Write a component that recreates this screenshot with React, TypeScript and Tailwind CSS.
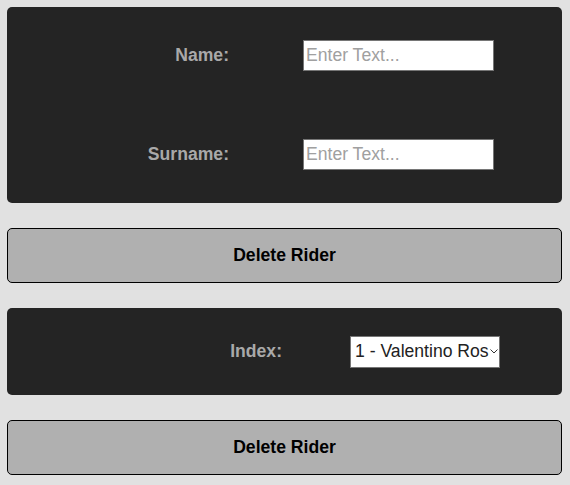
import React from "react";

const TextField = ({ label }: { label: string }) => (
  <div className="flex items-center">
    <label className="w-[222px] text-right font-bold text-[17.6px] text-[#a9a9a9]">{label}</label>
    <input
      type="text"
      placeholder="Enter Text..."
      className="ml-[74px] w-[191px] h-[31px] bg-white border border-[#767676] px-[2px] text-[17.6px] text-[#222] placeholder:text-[#a0a0a0] outline-none"
    />
  </div>
);

const DeleteButton = () => (
  <button className="w-full h-[55px] bg-[#b0b0b0] border border-black rounded-[5px] font-bold text-[17.6px] text-black">
    Delete Rider
  </button>
);

export default function App() {
  return (
    <div className="min-h-[485px] bg-[#e1e1e1] pl-[7px] pt-[7px] pr-[8px] flex flex-col gap-[25px] font-['Liberation_Sans',Arial,sans-serif]">
      <div className="bg-[#242424] rounded-[5px] pt-[33px] pb-[33px] flex flex-col gap-[68px]">
        <TextField label="Name:" />
        <TextField label="Surname:" />
      </div>
      <DeleteButton />
      <div className="bg-[#242424] rounded-[5px] h-[87px] flex items-center">
        <label className="w-[275px] text-right font-bold text-[17.6px] text-[#a9a9a9]">Index:</label>
        <div className="relative ml-[68px]">
          <select
            defaultValue="1"
            className="appearance-none w-[150px] h-[32px] bg-white border border-[#767676] pl-[4px] pr-[10px] text-[17.6px] text-[#222] outline-none"
          >
            <option value="1">1 - Valentino Rossi</option>
            <option value="2">2 - Marc Marquez</option>
          </select>
          <svg
            className="absolute right-[2px] top-[13px] pointer-events-none"
            width="8"
            height="5"
            viewBox="0 0 8 5"
            fill="none"
          >
            <path d="M0.5 0.5 L4 4 L7.5 0.5" stroke="#333" strokeWidth="1" />
          </svg>
        </div>
      </div>
      <DeleteButton />
    </div>
  );
}
